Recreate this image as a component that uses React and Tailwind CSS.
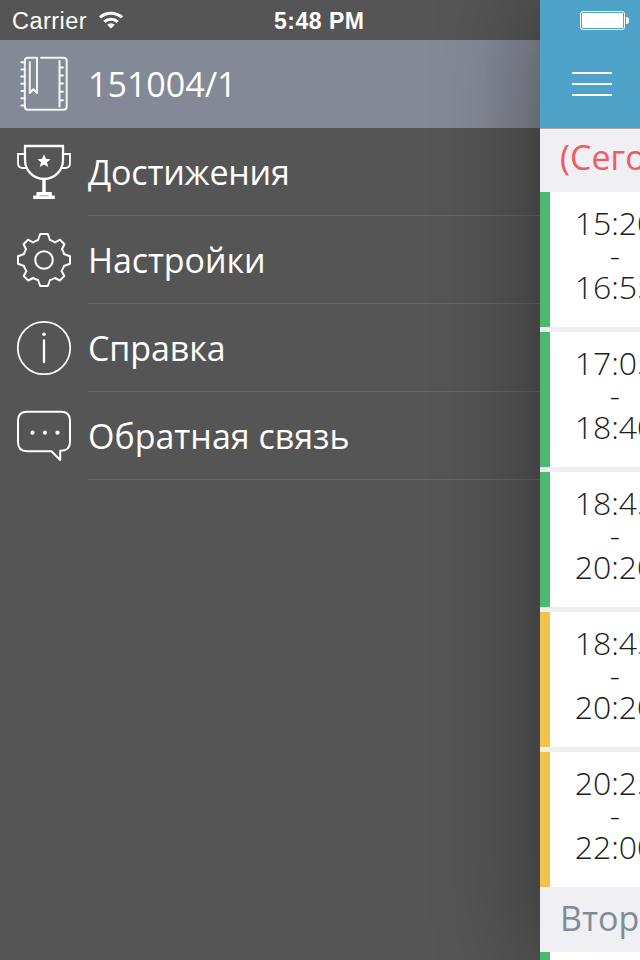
const stroke = { fill: 'none', stroke: 'white', strokeWidth: 2, strokeLinejoin: 'round', strokeLinecap: 'round' };

function NotebookIcon() {
  return (
    <svg width="56" height="56" viewBox="16 56 56 56" {...stroke} className="opacity-90">
      <path d="M41 57.8H63.5Q66.7 57.8 66.7 61V106.500Q66.700 109.700 63.500 109.700H28Q24.800 109.700 24.800 106.500V61Q24.800 57.800 28 57.800H37V93L33.400 89.200L29.800 93V62" />
      <path d="M59.500 61V106.500M59.500 67.500H63M59.500 75.500H63M59.500 83.500H63M59.500 91.700H63M59.500 100.200H63" />
      <path d="M21.300 62.200H25M21.300 69.500H25M21.300 76.500H25M21.300 83.800H25M21.300 91H25M21.300 98.200H25M21.300 105.400H25" />
    </svg>
  );
}

function TrophyIcon() {
  return (
    <svg width="56" height="56" viewBox="16 144 56 56" {...stroke} strokeLinejoin="miter" strokeLinecap="butt">
      <path d="M25 146H63V160C63 171 54 179 44 179S25 171 25 160Z" strokeWidth="2.300" />
      <path d="M25 154H18V163Q18 168 23 168H26.500M63 154H70V163Q70 168 65 168H61.500" strokeWidth="1.800" />
      <path d="M44 179V193" strokeWidth="3.500" />
      <path d="M36.500 192H51.800V195.500H54.800V199H33.200V195.500H36.500Z" fill="white" stroke="none" />
      <path d="M39.500 195.700H48.500" stroke="#bbb" strokeWidth="1.500" />
      <path d="M44 154.300L45.900 158.800L50.700 159.200L47 162.300L48.200 167L44 164.500L39.800 167L41 162.300L37.300 159.200L42.100 158.800Z" fill="white" stroke="none" />
    </svg>
  );
}

function GearIcon() {
  return (
    <svg width="56" height="56" viewBox="-28 -28 56 56" {...stroke}>
      <circle r="8.800" />
      <path d="M-3.800 -26H3.800L6 -20Q9 -19 11 -17.500L16 -20.300L20.500 -15.800L18 -11Q19.500 -8.500 20 -6L26 -3.800V3.800L20 6Q19 9 17.500 11L20.300 16L15.800 20.500L11 18Q8.500 19.500 6 20L3.800 26H-3.800L-6 20Q-9 19 -11 18L-15.800 20.500L-20.300 16L-17.500 11Q-19.500 8.500 -20 6L-26 3.800V-3.800L-20 -6Q-19 -9 -18 -11L-20.500 -15.800L-16 -20.300L-11 -17.500Q-8.500 -19 -6 -20Z" />
    </svg>
  );
}

function InfoIcon() {
  return (
    <svg width="56" height="56" viewBox="16 320 56 56" {...stroke}>
      <circle cx="44" cy="348" r="26.200" strokeWidth="1.800" />
      <circle cx="44" cy="334.300" r="1.800" fill="white" stroke="none" />
      <path d="M44 340.500V362" strokeWidth="2.300" />
    </svg>
  );
}

function ChatIcon() {
  return (
    <svg width="56" height="56" viewBox="16 408 56 56" {...stroke}>
      <path d="M27 411.800H61Q70 411.800 70 420.500V442Q70 450.700 61 450.700H60.200V460L51.500 451.200H27Q18 451.200 18 442V420.500Q18 411.800 27 411.800Z" />
      <g fill="white" stroke="none">
        <circle cx="32.500" cy="432.700" r="2.100" />
        <circle cx="45" cy="432.700" r="2.100" />
        <circle cx="57.500" cy="432.700" r="2.100" />
      </g>
    </svg>
  );
}

const items = [
  { label: 'Достижения', Icon: TrophyIcon, spacing: 'tracking-[-0.2px]' },
  { label: 'Настройки', Icon: GearIcon, spacing: 'tracking-[-0.1px]' },
  { label: 'Справка', Icon: InfoIcon, spacing: 'tracking-[-0.1px]' },
  { label: 'Обратная связь', Icon: ChatIcon, spacing: 'tracking-normal' },
];

const lessons = [
  { from: '15:20', to: '16:55', color: 'bg-[#4db970]' },
  { from: '17:05', to: '18:40', color: 'bg-[#4db970]' },
  { from: '18:45', to: '20:20', color: 'bg-[#4db970]' },
  { from: '18:45', to: '20:20', color: 'bg-[#f1c34c]' },
  { from: '20:25', to: '22:00', color: 'bg-[#f1c34c]' },
];

export default function App() {
  return (
    <div className="flex h-[960px] w-[640px] overflow-hidden bg-[#555] font-['Open_Sans','Noto_Sans',sans-serif]">
      <aside className="w-[540px] shrink-0 text-[34px] text-white">
        <div className="flex h-10 items-center pl-3 font-['Liberation_Sans',sans-serif] leading-10">
          <span className="w-[87px] whitespace-nowrap pt-0.5 text-[23.5px] tracking-[0.45px]">Carrier</span>
          <svg width="26" height="20" viewBox="0 0 26 20" fill="white" className="w-[26px]">
            <path d="M-.2 6.300A18.500 18.500 0 0 1 24.200 6.300L22 8.500A15 15 0 0 0 2 8.500Z" />
            <path d="M4.200 10.700A11.500 11.500 0 0 1 19.800 10.700L17.600 12.900A8.300 8.300 0 0 0 6.400 12.900Z" />
            <path d="M8.200 14.800A6 6 0 0 1 15.800 14.800L12 18.500Z" />
          </svg>
          <span className="ml-[149px] whitespace-nowrap pt-0.5 text-[23px] font-bold tracking-[0.5px]">5:48 PM</span>
        </div>
        <div className="flex h-[88px] items-center bg-[#838996] pl-4">
          <NotebookIcon />
          <span className="ml-4">151004/1</span>
        </div>
        {items.map(({ label, Icon, spacing }) => (
          <div key={label} className="flex h-[88px] items-center pl-4">
            <Icon />
            <div className="ml-4 flex h-full flex-1 items-center border-b border-[#656565] pt-0.5">
              <span className={spacing}>{label}</span>
            </div>
          </div>
        ))}
      </aside>
      <main className="flex w-[100px] shrink-0 flex-col whitespace-nowrap bg-[#efefef] shadow-[0_0_100px_rgba(0,0,0,0.45)]">
        <header className="h-32 shrink-0 bg-[#4fa2c8]">
          <div className="flex h-10 items-center pl-10">
            <div className="h-[19px] w-[45px] rounded-[3px] border border-white p-px">
              <div className="h-full rounded-[1px] bg-white" />
            </div>
            <div className="ml-px h-[7px] w-[3px] rounded-r-full bg-white" />
          </div>
          <div className="ml-8 mt-8 flex w-10 flex-col gap-[9px]">
            <div className="h-0.5 bg-white" />
            <div className="h-0.5 bg-white" />
            <div className="h-0.5 bg-white" />
          </div>
        </header>
        <div className="flex h-16 shrink-0 overflow-hidden border-t border-[#aaa] bg-[#efeff4] pl-5 text-[34px] leading-[57px] text-[#f4595c]">(Сегодня)</div>
        <div className="flex shrink-0 flex-col gap-[5px]">
          {lessons.map((l, i) => (
            <div key={i} className="flex h-[135px] overflow-hidden bg-white">
              <div className={`w-2.5 shrink-0 ${l.color}`} />
              <div className="ml-6 flex w-[82px] shrink-0 flex-col items-center pt-[15px] text-[32px] font-light leading-8 text-[#1d1d22]">
                <span>{l.from}</span>
                <span>-</span>
                <span>{l.to}</span>
              </div>
            </div>
          ))}
        </div>
        <div className="h-[65px] shrink-0 overflow-hidden bg-[#efeff4] pl-5 text-[34px] leading-[62px] text-[#838b98]">Вторник</div>
        <div className="flex h-2 shrink-0 bg-white">
          <div className="w-2.5 bg-[#4db970]" />
        </div>
      </main>
    </div>
  );
}
